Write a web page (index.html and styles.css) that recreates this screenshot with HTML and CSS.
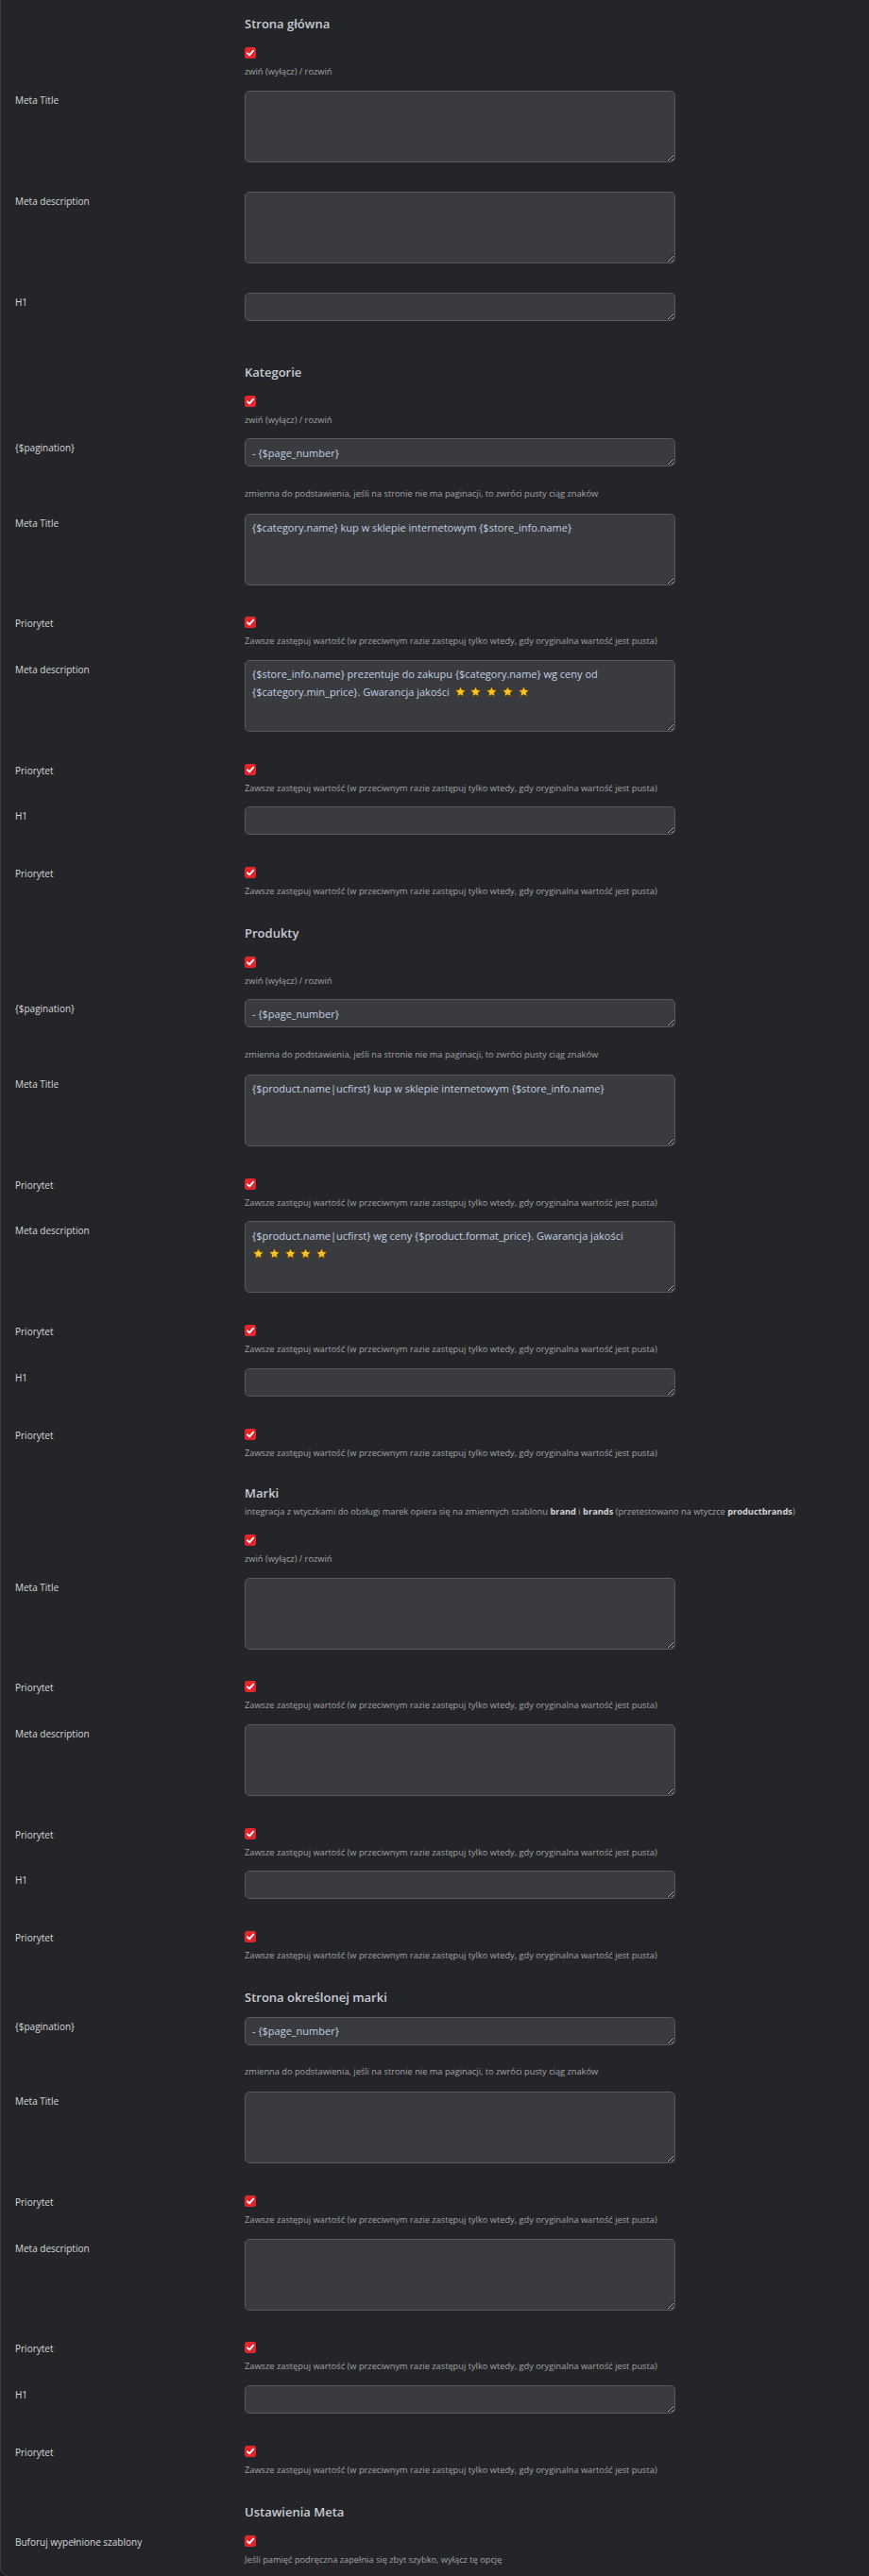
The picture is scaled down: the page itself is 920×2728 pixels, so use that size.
FILE: index.html
```html
<!DOCTYPE html>
<html lang="pl">
<head>
<meta charset="utf-8">
<title>Meta</title>
<link rel="stylesheet" href="styles.css">
</head>
<body>
<div class="panel">

  <section class="sec sec-first">
    <h3 class="sec-title">Strona główna</h3>
    <div class="row row-check">
      <div class="lbl"></div>
      <div class="ctl"><span class="cb"><svg viewBox="0 0 12 12" width="12" height="12"><rect width="12" height="12" rx="2.5" fill="#e4252b"/><path d="M3 6.3 L5.1 8.4 L9.2 3.7" fill="none" stroke="#fff" stroke-width="1.8" stroke-linecap="round" stroke-linejoin="round"/></svg></span><div class="hint">zwiń (wyłącz) / rozwiń</div></div>
    </div>
    <div class="row row-ta">
      <div class="lbl">Meta Title</div>
      <div class="ctl"><div class="field ta"></div></div>
    </div>
    <div class="row row-ta">
      <div class="lbl">Meta description</div>
      <div class="ctl"><div class="field ta"></div></div>
    </div>
    <div class="row row-in">
      <div class="lbl">H1</div>
      <div class="ctl"><div class="field in"></div></div>
    </div>
  </section>

  <section class="sec">
    <h3 class="sec-title">Kategorie</h3>
    <div class="row row-check">
      <div class="lbl"></div>
      <div class="ctl"><span class="cb"><svg viewBox="0 0 12 12" width="12" height="12"><rect width="12" height="12" rx="2.5" fill="#e4252b"/><path d="M3 6.3 L5.1 8.4 L9.2 3.7" fill="none" stroke="#fff" stroke-width="1.8" stroke-linecap="round" stroke-linejoin="round"/></svg></span><div class="hint">zwiń (wyłącz) / rozwiń</div></div>
    </div>
    <div class="row row-pag">
      <div class="lbl">{$pagination}</div>
      <div class="ctl"><div class="field in">- {$page_number}</div><div class="hint hint-pag">zmienna do podstawienia, jeśli na stronie nie ma paginacji, to zwróci pusty ciąg znaków</div></div>
    </div>
    <div class="row row-ta">
      <div class="lbl">Meta Title</div>
      <div class="ctl"><div class="field ta">{$category.name} kup w sklepie internetowym {$store_info.name}</div></div>
    </div>
    <div class="row row-check">
      <div class="lbl">Priorytet</div>
      <div class="ctl"><span class="cb"><svg viewBox="0 0 12 12" width="12" height="12"><rect width="12" height="12" rx="2.5" fill="#e4252b"/><path d="M3 6.3 L5.1 8.4 L9.2 3.7" fill="none" stroke="#fff" stroke-width="1.8" stroke-linecap="round" stroke-linejoin="round"/></svg></span><div class="hint">Zawsze zastępuj wartość (w przeciwnym razie zastępuj tylko wtedy, gdy oryginalna wartość jest pusta)</div></div>
    </div>
    <div class="row row-ta">
      <div class="lbl">Meta description</div>
      <div class="ctl"><div class="field ta">{$store_info.name} prezentuje do zakupu {$category.name} wg ceny od<br>{$category.min_price}. Gwarancja jakości <span class="stars spaced"><svg class="star" viewBox="0 0 24 24"><polygon points="12,1.8 15.1,8.3 22.2,9.2 17,14.1 18.3,21.2 12,17.8 5.7,21.2 7,14.1 1.8,9.2 8.9,8.3"/></svg><svg class="star" viewBox="0 0 24 24"><polygon points="12,1.8 15.1,8.3 22.2,9.2 17,14.1 18.3,21.2 12,17.8 5.7,21.2 7,14.1 1.8,9.2 8.9,8.3"/></svg><svg class="star" viewBox="0 0 24 24"><polygon points="12,1.8 15.1,8.3 22.2,9.2 17,14.1 18.3,21.2 12,17.8 5.7,21.2 7,14.1 1.8,9.2 8.9,8.3"/></svg><svg class="star" viewBox="0 0 24 24"><polygon points="12,1.8 15.1,8.3 22.2,9.2 17,14.1 18.3,21.2 12,17.8 5.7,21.2 7,14.1 1.8,9.2 8.9,8.3"/></svg><svg class="star" viewBox="0 0 24 24"><polygon points="12,1.8 15.1,8.3 22.2,9.2 17,14.1 18.3,21.2 12,17.8 5.7,21.2 7,14.1 1.8,9.2 8.9,8.3"/></svg></span></div></div>
    </div>
    <div class="row row-check">
      <div class="lbl">Priorytet</div>
      <div class="ctl"><span class="cb"><svg viewBox="0 0 12 12" width="12" height="12"><rect width="12" height="12" rx="2.5" fill="#e4252b"/><path d="M3 6.3 L5.1 8.4 L9.2 3.7" fill="none" stroke="#fff" stroke-width="1.8" stroke-linecap="round" stroke-linejoin="round"/></svg></span><div class="hint">Zawsze zastępuj wartość (w przeciwnym razie zastępuj tylko wtedy, gdy oryginalna wartość jest pusta)</div></div>
    </div>
    <div class="row row-in">
      <div class="lbl">H1</div>
      <div class="ctl"><div class="field in"></div></div>
    </div>
    <div class="row row-check">
      <div class="lbl">Priorytet</div>
      <div class="ctl"><span class="cb"><svg viewBox="0 0 12 12" width="12" height="12"><rect width="12" height="12" rx="2.5" fill="#e4252b"/><path d="M3 6.3 L5.1 8.4 L9.2 3.7" fill="none" stroke="#fff" stroke-width="1.8" stroke-linecap="round" stroke-linejoin="round"/></svg></span><div class="hint">Zawsze zastępuj wartość (w przeciwnym razie zastępuj tylko wtedy, gdy oryginalna wartość jest pusta)</div></div>
    </div>
  </section>

  <section class="sec">
    <h3 class="sec-title">Produkty</h3>
    <div class="row row-check">
      <div class="lbl"></div>
      <div class="ctl"><span class="cb"><svg viewBox="0 0 12 12" width="12" height="12"><rect width="12" height="12" rx="2.5" fill="#e4252b"/><path d="M3 6.3 L5.1 8.4 L9.2 3.7" fill="none" stroke="#fff" stroke-width="1.8" stroke-linecap="round" stroke-linejoin="round"/></svg></span><div class="hint">zwiń (wyłącz) / rozwiń</div></div>
    </div>
    <div class="row row-pag">
      <div class="lbl">{$pagination}</div>
      <div class="ctl"><div class="field in">- {$page_number}</div><div class="hint hint-pag">zmienna do podstawienia, jeśli na stronie nie ma paginacji, to zwróci pusty ciąg znaków</div></div>
    </div>
    <div class="row row-ta">
      <div class="lbl">Meta Title</div>
      <div class="ctl"><div class="field ta">{$product.name|ucfirst} kup w sklepie internetowym {$store_info.name}</div></div>
    </div>
    <div class="row row-check">
      <div class="lbl">Priorytet</div>
      <div class="ctl"><span class="cb"><svg viewBox="0 0 12 12" width="12" height="12"><rect width="12" height="12" rx="2.5" fill="#e4252b"/><path d="M3 6.3 L5.1 8.4 L9.2 3.7" fill="none" stroke="#fff" stroke-width="1.8" stroke-linecap="round" stroke-linejoin="round"/></svg></span><div class="hint">Zawsze zastępuj wartość (w przeciwnym razie zastępuj tylko wtedy, gdy oryginalna wartość jest pusta)</div></div>
    </div>
    <div class="row row-ta">
      <div class="lbl">Meta description</div>
      <div class="ctl"><div class="field ta">{$product.name|ucfirst} wg ceny {$product.format_price}. Gwarancja jakości<br><span class="stars"><svg class="star" viewBox="0 0 24 24"><polygon points="12,1.8 15.1,8.3 22.2,9.2 17,14.1 18.3,21.2 12,17.8 5.7,21.2 7,14.1 1.8,9.2 8.9,8.3"/></svg><svg class="star" viewBox="0 0 24 24"><polygon points="12,1.8 15.1,8.3 22.2,9.2 17,14.1 18.3,21.2 12,17.8 5.7,21.2 7,14.1 1.8,9.2 8.9,8.3"/></svg><svg class="star" viewBox="0 0 24 24"><polygon points="12,1.8 15.1,8.3 22.2,9.2 17,14.1 18.3,21.2 12,17.8 5.7,21.2 7,14.1 1.8,9.2 8.9,8.3"/></svg><svg class="star" viewBox="0 0 24 24"><polygon points="12,1.8 15.1,8.3 22.2,9.2 17,14.1 18.3,21.2 12,17.8 5.7,21.2 7,14.1 1.8,9.2 8.9,8.3"/></svg><svg class="star" viewBox="0 0 24 24"><polygon points="12,1.8 15.1,8.3 22.2,9.2 17,14.1 18.3,21.2 12,17.8 5.7,21.2 7,14.1 1.8,9.2 8.9,8.3"/></svg></span></div></div>
    </div>
    <div class="row row-check">
      <div class="lbl">Priorytet</div>
      <div class="ctl"><span class="cb"><svg viewBox="0 0 12 12" width="12" height="12"><rect width="12" height="12" rx="2.5" fill="#e4252b"/><path d="M3 6.3 L5.1 8.4 L9.2 3.7" fill="none" stroke="#fff" stroke-width="1.8" stroke-linecap="round" stroke-linejoin="round"/></svg></span><div class="hint">Zawsze zastępuj wartość (w przeciwnym razie zastępuj tylko wtedy, gdy oryginalna wartość jest pusta)</div></div>
    </div>
    <div class="row row-in">
      <div class="lbl">H1</div>
      <div class="ctl"><div class="field in"></div></div>
    </div>
    <div class="row row-check">
      <div class="lbl">Priorytet</div>
      <div class="ctl"><span class="cb"><svg viewBox="0 0 12 12" width="12" height="12"><rect width="12" height="12" rx="2.5" fill="#e4252b"/><path d="M3 6.3 L5.1 8.4 L9.2 3.7" fill="none" stroke="#fff" stroke-width="1.8" stroke-linecap="round" stroke-linejoin="round"/></svg></span><div class="hint">Zawsze zastępuj wartość (w przeciwnym razie zastępuj tylko wtedy, gdy oryginalna wartość jest pusta)</div></div>
    </div>
  </section>

  <section class="sec">
    <div class="sec-head">
      <h3 class="sec-title sec-title-sub">Marki</h3>
      <p class="sec-sub">integracja z wtyczkami do obsługi marek opiera się na zmiennych szablonu <b>brand</b> i <b>brands</b> (przetestowano na wtyczce <b>productbrands</b>)</p>
    </div>
    <div class="row row-check">
      <div class="lbl"></div>
      <div class="ctl"><span class="cb"><svg viewBox="0 0 12 12" width="12" height="12"><rect width="12" height="12" rx="2.5" fill="#e4252b"/><path d="M3 6.3 L5.1 8.4 L9.2 3.7" fill="none" stroke="#fff" stroke-width="1.8" stroke-linecap="round" stroke-linejoin="round"/></svg></span><div class="hint">zwiń (wyłącz) / rozwiń</div></div>
    </div>
    <div class="row row-ta">
      <div class="lbl">Meta Title</div>
      <div class="ctl"><div class="field ta"></div></div>
    </div>
    <div class="row row-check">
      <div class="lbl">Priorytet</div>
      <div class="ctl"><span class="cb"><svg viewBox="0 0 12 12" width="12" height="12"><rect width="12" height="12" rx="2.5" fill="#e4252b"/><path d="M3 6.3 L5.1 8.4 L9.2 3.7" fill="none" stroke="#fff" stroke-width="1.8" stroke-linecap="round" stroke-linejoin="round"/></svg></span><div class="hint">Zawsze zastępuj wartość (w przeciwnym razie zastępuj tylko wtedy, gdy oryginalna wartość jest pusta)</div></div>
    </div>
    <div class="row row-ta">
      <div class="lbl">Meta description</div>
      <div class="ctl"><div class="field ta"></div></div>
    </div>
    <div class="row row-check">
      <div class="lbl">Priorytet</div>
      <div class="ctl"><span class="cb"><svg viewBox="0 0 12 12" width="12" height="12"><rect width="12" height="12" rx="2.5" fill="#e4252b"/><path d="M3 6.3 L5.1 8.4 L9.2 3.7" fill="none" stroke="#fff" stroke-width="1.8" stroke-linecap="round" stroke-linejoin="round"/></svg></span><div class="hint">Zawsze zastępuj wartość (w przeciwnym razie zastępuj tylko wtedy, gdy oryginalna wartość jest pusta)</div></div>
    </div>
    <div class="row row-in">
      <div class="lbl">H1</div>
      <div class="ctl"><div class="field in"></div></div>
    </div>
    <div class="row row-check">
      <div class="lbl">Priorytet</div>
      <div class="ctl"><span class="cb"><svg viewBox="0 0 12 12" width="12" height="12"><rect width="12" height="12" rx="2.5" fill="#e4252b"/><path d="M3 6.3 L5.1 8.4 L9.2 3.7" fill="none" stroke="#fff" stroke-width="1.8" stroke-linecap="round" stroke-linejoin="round"/></svg></span><div class="hint">Zawsze zastępuj wartość (w przeciwnym razie zastępuj tylko wtedy, gdy oryginalna wartość jest pusta)</div></div>
    </div>
  </section>

  <section class="sec">
    <h3 class="sec-title">Strona określonej marki</h3>
    <div class="row row-pag">
      <div class="lbl">{$pagination}</div>
      <div class="ctl"><div class="field in">- {$page_number}</div><div class="hint hint-pag">zmienna do podstawienia, jeśli na stronie nie ma paginacji, to zwróci pusty ciąg znaków</div></div>
    </div>
    <div class="row row-ta">
      <div class="lbl">Meta Title</div>
      <div class="ctl"><div class="field ta"></div></div>
    </div>
    <div class="row row-check">
      <div class="lbl">Priorytet</div>
      <div class="ctl"><span class="cb"><svg viewBox="0 0 12 12" width="12" height="12"><rect width="12" height="12" rx="2.5" fill="#e4252b"/><path d="M3 6.3 L5.1 8.4 L9.2 3.7" fill="none" stroke="#fff" stroke-width="1.8" stroke-linecap="round" stroke-linejoin="round"/></svg></span><div class="hint">Zawsze zastępuj wartość (w przeciwnym razie zastępuj tylko wtedy, gdy oryginalna wartość jest pusta)</div></div>
    </div>
    <div class="row row-ta">
      <div class="lbl">Meta description</div>
      <div class="ctl"><div class="field ta"></div></div>
    </div>
    <div class="row row-check">
      <div class="lbl">Priorytet</div>
      <div class="ctl"><span class="cb"><svg viewBox="0 0 12 12" width="12" height="12"><rect width="12" height="12" rx="2.5" fill="#e4252b"/><path d="M3 6.3 L5.1 8.4 L9.2 3.7" fill="none" stroke="#fff" stroke-width="1.8" stroke-linecap="round" stroke-linejoin="round"/></svg></span><div class="hint">Zawsze zastępuj wartość (w przeciwnym razie zastępuj tylko wtedy, gdy oryginalna wartość jest pusta)</div></div>
    </div>
    <div class="row row-in">
      <div class="lbl">H1</div>
      <div class="ctl"><div class="field in"></div></div>
    </div>
    <div class="row row-check">
      <div class="lbl">Priorytet</div>
      <div class="ctl"><span class="cb"><svg viewBox="0 0 12 12" width="12" height="12"><rect width="12" height="12" rx="2.5" fill="#e4252b"/><path d="M3 6.3 L5.1 8.4 L9.2 3.7" fill="none" stroke="#fff" stroke-width="1.8" stroke-linecap="round" stroke-linejoin="round"/></svg></span><div class="hint">Zawsze zastępuj wartość (w przeciwnym razie zastępuj tylko wtedy, gdy oryginalna wartość jest pusta)</div></div>
    </div>
  </section>

  <section class="sec sec-last">
    <h3 class="sec-title">Ustawienia Meta</h3>
    <div class="row row-check">
      <div class="lbl">Buforuj wypełnione szablony</div>
      <div class="ctl"><span class="cb"><svg viewBox="0 0 12 12" width="12" height="12"><rect width="12" height="12" rx="2.5" fill="#e4252b"/><path d="M3 6.3 L5.1 8.4 L9.2 3.7" fill="none" stroke="#fff" stroke-width="1.8" stroke-linecap="round" stroke-linejoin="round"/></svg></span><div class="hint">Jeśli pamięć podręczna zapełnia się zbyt szybko, wyłącz tę opcję</div></div>
    </div>
  </section>

</div>
</body>
</html>
```

FILE: styles.css
```css
html, body {
  margin: 0;
  padding: 0;
  background: #1b1c1f;
}

body {
  font-family: "Open Sans", "Noto Sans", "DejaVu Sans", sans-serif;
  color: #d6d6d8;
  overflow: hidden;
}

.panel {
  background: #242528;
  border-left: 1px solid #3d3e42;
  border-bottom: 1px solid #3d3e42;
  border-bottom-left-radius: 10px;
  padding: 1px 0 8px 15px;
  min-height: 2719px;
}

.sec-title {
  margin: 0;
  padding: 14px 0 11px 243px;
  font-size: 13px;
  line-height: 20px;
  font-weight: 600;
  color: #c9cad4;
}

.sec-head {
  padding: 13px 0 13px 243px;
}

.sec-title-sub {
  padding: 0;
}

.sec-sub {
  margin: 3px 0 0;
  font-size: 9.25px;
  line-height: 14px;
  color: #a3a3a6;
  white-space: nowrap;
}

.sec-sub b {
  font-weight: 700;
  color: #d3d3d6;
}

.row {
  display: grid;
  grid-template-columns: 243px 456px;
}

.lbl {
  font-size: 10px;
  line-height: 16px;
  padding-top: 2px;
  color: #d8d8da;
}

.ctl {
  display: flex;
  flex-direction: column;
  align-items: flex-start;
}

.row-check {
  padding-top: 4px;
  margin-bottom: 12.6px;
}

.row-check .lbl {
  padding-top: 0;
  margin-top: -1px;
}

.cb {
  display: block;
  width: 12px;
  height: 12px;
}

.cb svg {
  display: block;
}

.hint {
  margin-top: 7px;
  font-size: 9.25px;
  line-height: 14px;
  color: #a3a3a6;
  white-space: nowrap;
}

.hint-pag {
  margin-top: 21.5px;
}

.row-ta {
  margin-bottom: 29.7px;
}

.sec-first .row-ta {
  margin-bottom: 31px;
}

.row-in {
  margin-bottom: 30px;
}

.row-pag {
  margin-bottom: 14px;
}

.field {
  box-sizing: border-box;
  width: 456px;
  background: #3a3b3e;
  border: 1px solid #57585c;
  border-radius: 5px;
  padding: 4.5px 7px;
  font-size: 11px;
  line-height: 19px;
  color: #c2d0e6;
  resize: vertical;
  overflow: auto;
  color-scheme: dark;
}

.field.ta {
  height: 76px;
}

.field.in {
  height: 30px;
  overflow: hidden;
}

.stars {
  display: inline-flex;
  gap: 3.8px;
  vertical-align: -2px;
}

.stars.spaced {
  margin-left: 2px;
}

.star {
  width: 13px;
  height: 13px;
  fill: #f7c12b;
  stroke: #5b4104;
  stroke-width: 1.6;
  stroke-linejoin: round;
}

.sec-last .row-check {
  margin-bottom: 0;
}
```
